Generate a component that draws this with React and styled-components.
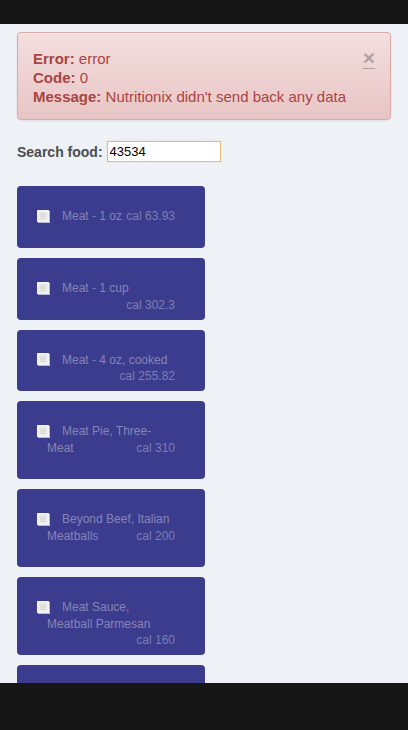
import React from "react";
import styled, { createGlobalStyle } from "styled-components";

const Global = createGlobalStyle`
  html, body { margin: 0; padding: 0; }
  body {
    background: #eef1f5;
    font-family: "Liberation Sans", Arial, Helvetica, sans-serif;
  }
`;

const Frame = styled.div`
  height: 730px;
  display: flex;
  flex-direction: column;
  overflow: hidden;
`;

const SystemBar = styled.div`
  flex: 0 0 ${(p) => p.$h}px;
  background: #161616;
`;

const Main = styled.main`
  flex: 1;
  overflow: hidden;
  padding: 8px 17px 0;
  background: #eef1f5;
`;

const Alert = styled.div`
  position: relative;
  padding: 16px 15px 13px 15px;
  border: 1px solid #dca7a7;
  border-radius: 4px;
  background: linear-gradient(to bottom, #f3dede 0%, #e9c5c5 100%);
  box-shadow: inset 0 1px 0 rgba(255, 255, 255, 0.25), 0 1px 2px rgba(0, 0, 0, 0.08);
  color: #a94442;
  font-size: 15px;
  line-height: 19px;
`;

const AlertLine = styled.div`
  white-space: nowrap;
`;

const Close = styled.a`
  position: absolute;
  top: 14px;
  right: 15px;
  font-size: 21px;
  font-weight: bold;
  line-height: 1;
  color: #000;
  opacity: 0.25;
  text-decoration: underline;
  text-decoration-thickness: 1px;
  text-underline-offset: 3px;
  cursor: pointer;
`;

const SearchRow = styled.div`
  display: flex;
  align-items: center;
  margin-top: 21px;
  height: 21px;
`;

const Label = styled.label`
  font-size: 14px;
  font-weight: bold;
  color: #4a4d52;
  margin-right: 4px;
`;

const Input = styled.input`
  box-sizing: border-box;
  width: 114px;
  height: 21px;
  border: 1px solid #dfbe78;
  box-shadow: 0 0 1px rgba(220, 180, 100, 0.6);
  padding: 1px 2px;
  font-family: "Liberation Sans", Arial, sans-serif;
  font-size: 13px;
  color: #000;
  background: #fff;
  outline: none;
`;

const List = styled.div`
  margin-top: 24px;
`;

const Card = styled.div`
  width: 188px;
  box-sizing: border-box;
  padding: 22px 30px 23px 30px;
  margin-bottom: 10px;
  background: #3c3c8e;
  border-radius: 4px;
  color: #8484b6;
  font-size: 12px;
  line-height: 16px;
  text-indent: -10px;
`;

const Cal = styled.span`
  float: right;
  text-indent: 0;
  color: #7c7cb1;
`;

const IconWrap = styled.span`
  display: inline-block;
  text-indent: 0;
  width: 14px;
  height: 16px;
  vertical-align: middle;
  margin-right: 11px;
  position: relative;
  top: -1px;
`;

const BrokenIcon = () => (
  <IconWrap>
    <svg width="14" height="16" viewBox="0 0 14 16">
      <rect x="0" y="2" width="12" height="12" fill="#f2f2f6" />
      <rect x="2.5" y="4.5" width="7" height="7" fill="#dfe1d6" stroke="#e8e8ee" />
      <line x1="12.5" y1="3" x2="12.5" y2="15" stroke="#b9b9d6" strokeWidth="1" />
      <line x1="1" y1="14.5" x2="13" y2="14.5" stroke="#b9b9d6" strokeWidth="1" />
    </svg>
  </IconWrap>
);

const foods = [
  { name: "Meat - 1 oz", cal: "63.93" },
  { name: "Meat - 1 cup", cal: "302.3" },
  { name: "Meat - 4 oz, cooked", cal: "255.82" },
  { name: "Meat Pie, Three-Meat", cal: "310" },
  { name: "Beyond Beef, Italian Meatballs", cal: "200" },
  { name: "Meat Sauce, Meatball Parmesan", cal: "160" },
  { name: "Meatball Sub", cal: "480" },
];

export default function App() {
  return (
    <>
      <Global />
      <Frame>
        <SystemBar $h={24} />
        <Main>
          <Alert>
            <Close>×</Close>
            <AlertLine>
              <strong>Error:</strong> error
            </AlertLine>
            <AlertLine>
              <strong>Code:</strong> 0
            </AlertLine>
            <AlertLine>
              <strong>Message:</strong> Nutritionix didn't send back any data
            </AlertLine>
          </Alert>
          <SearchRow>
            <Label htmlFor="food">Search food:</Label>
            <Input id="food" defaultValue="43534" />
          </SearchRow>
          <List>
            {foods.map((f) => (
              <Card key={f.name}>
                <BrokenIcon />
                {f.name} <Cal>cal {f.cal}</Cal>
              </Card>
            ))}
          </List>
        </Main>
        <SystemBar $h={47} />
      </Frame>
    </>
  );
}
